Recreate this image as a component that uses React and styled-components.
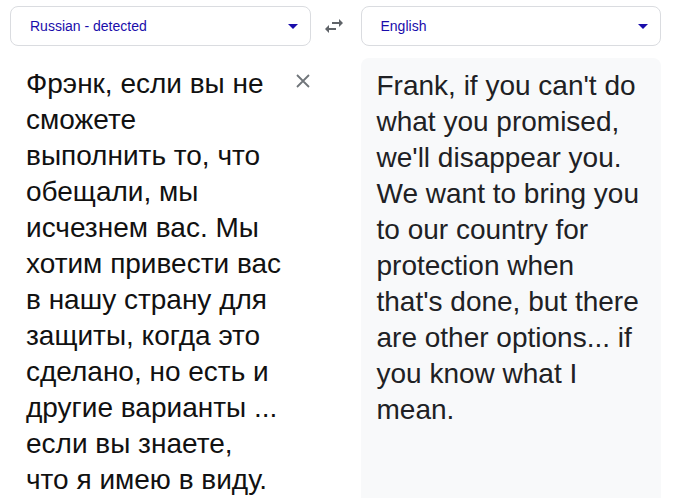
import React from 'react'
import styled, { createGlobalStyle } from 'styled-components'

const GlobalStyle = createGlobalStyle`
  html, body {
    margin: 0;
    padding: 0;
    background: #ffffff;
    font-family: "Liberation Sans", Arial, sans-serif;
    overflow: hidden;
  }
`

const Page = styled.div`
  padding: 6px 21px 0 10px;
  height: 100vh;
  box-sizing: border-box;
  display: flex;
  flex-direction: column;
`

const Bar = styled.div`
  display: grid;
  grid-template-columns: 1fr 50px 1fr;
  align-items: center;
`

const LangSelect = styled.div`
  height: 40px;
  box-sizing: border-box;
  border: 1px solid #dadce0;
  border-radius: 8px;
  display: flex;
  align-items: center;
  justify-content: space-between;
  padding: 0 12px 0 19px;
  color: #1a0dab;
  font-size: 14px;
`

const Caret = styled.span`
  width: 0;
  height: 0;
  border-left: 5px solid transparent;
  border-right: 5px solid transparent;
  border-top: 5px solid #1a0dab;
`

const SwapButton = styled.div`
  display: flex;
  justify-content: center;
  align-items: center;
  color: #5f6368;
  padding-right: 4px;
`

const Panels = styled.div`
  flex: 1;
  margin-top: 12px;
  display: grid;
  grid-template-columns: 1fr 50px 1fr;
  min-height: 0;
`

const Source = styled.div`
  display: flex;
  align-items: flex-start;
  padding: 8px 0 0 16px;
`

const Text = styled.div`
  flex: 1;
  font-size: 28px;
  line-height: 36px;
  color: ${(p) => (p.muted ? '#202124' : '#111111')};
`

const ClearButton = styled.div`
  margin: 8px 1px 0 14px;
  width: 14px;
  height: 14px;
  display: flex;
  color: #70757a;
`

const Target = styled.div`
  grid-column: 3;
  background: #f8f9fa;
  border-radius: 8px 8px 0 0;
  padding: 10px 16px 0 16px;
`

const SwapIcon = () => (
  <svg width="24" height="24" viewBox="0 0 24 24" fill="currentColor">
    <path d="M6.99 11L3 15l3.99 4v-3H14v-2H6.99v-3zM21 9l-3.99-4v3H10v2h7.01v3L21 9z" />
  </svg>
)

const CloseIcon = () => (
  <svg width="14" height="14" viewBox="0 0 14 14" stroke="currentColor" strokeWidth="1.8">
    <path d="M1 1L13 13M13 1L1 13" />
  </svg>
)

export default function App() {
  return (
    <Page>
      <GlobalStyle />
      <Bar>
        <LangSelect>
          Russian - detected
          <Caret />
        </LangSelect>
        <SwapButton>
          <SwapIcon />
        </SwapButton>
        <LangSelect>
          English
          <Caret />
        </LangSelect>
      </Bar>
      <Panels>
        <Source>
          <Text>
            Фрэнк, если вы не сможете выполнить то, что обещали, мы исчезнем вас. Мы хотим
            привести вас в нашу страну для защиты, когда это сделано, но есть и другие
            варианты ... если вы знаете, что я имею в виду.
          </Text>
          <ClearButton>
            <CloseIcon />
          </ClearButton>
        </Source>
        <Target>
          <Text muted>
            Frank, if you can't do what you promised, we'll disappear you. We want to bring
            you to our country for protection when that's done, but there are other
            options... if you know what I mean.
          </Text>
        </Target>
      </Panels>
    </Page>
  )
}
